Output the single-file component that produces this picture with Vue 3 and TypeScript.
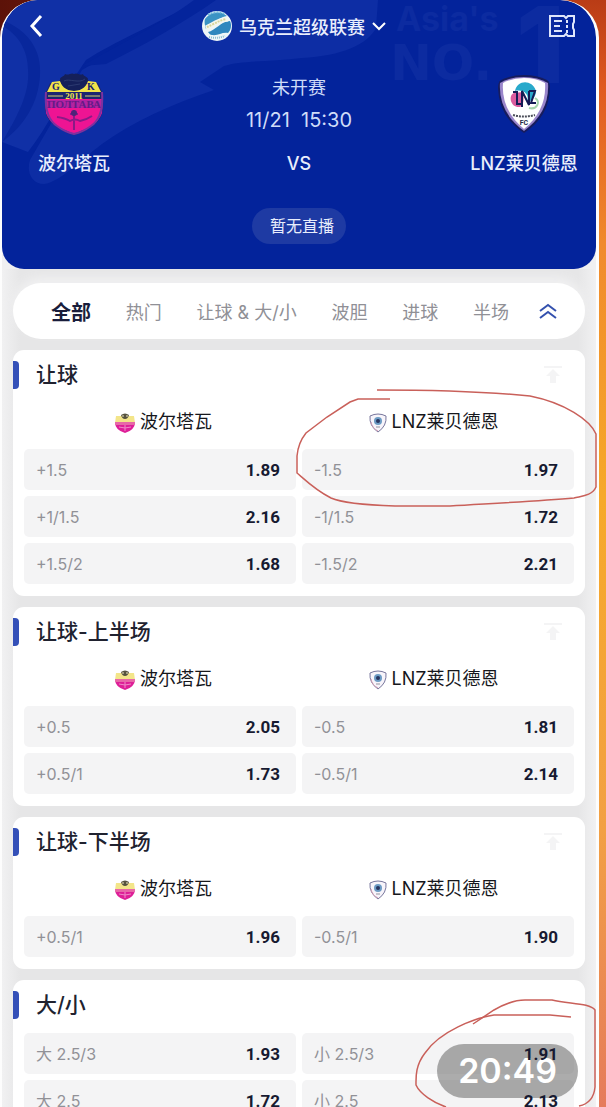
<script setup lang="ts">
interface Odd {
  label: string
  price: string
}
interface Market {
  title: string
  teams: boolean
  pin: boolean
  odds: Odd[]
}

const tabs: string[] = ['全部', '热门', '让球 & 大/小', '波胆', '进球', '半场']

const home = '波尔塔瓦'
const away = 'LNZ莱贝德恩'

const markets: Market[] = [
  {
    title: '让球',
    teams: true,
    pin: true,
    odds: [
      { label: '+1.5', price: '1.89' },
      { label: '-1.5', price: '1.97' },
      { label: '+1/1.5', price: '2.16' },
      { label: '-1/1.5', price: '1.72' },
      { label: '+1.5/2', price: '1.68' },
      { label: '-1.5/2', price: '2.21' },
    ],
  },
  {
    title: '让球-上半场',
    teams: true,
    pin: true,
    odds: [
      { label: '+0.5', price: '2.05' },
      { label: '-0.5', price: '1.81' },
      { label: '+0.5/1', price: '1.73' },
      { label: '-0.5/1', price: '2.14' },
    ],
  },
  {
    title: '让球-下半场',
    teams: true,
    pin: true,
    odds: [
      { label: '+0.5/1', price: '1.96' },
      { label: '-0.5/1', price: '1.90' },
    ],
  },
  {
    title: '大/小',
    teams: false,
    pin: false,
    odds: [
      { label: '大 2.5/3', price: '1.93' },
      { label: '小 2.5/3', price: '1.91' },
      { label: '大 2.5', price: '1.72' },
      { label: '小 2.5', price: '2.13' },
    ],
  },
]
</script>

<template>
  <div class="page">
    <div class="screen">
      <header class="hero">
        <svg class="hero-art" viewBox="0 0 594 269" preserveAspectRatio="xMidYMid slice" aria-hidden="true">
          <path d="M190 0H376L374 28C366 44 340 56 300 58C270 62 240 60 222 66L198 82L212 90C170 104 130 122 100 144C76 162 58 182 42 184C30 184 24 172 28 160L80 70C110 54 160 26 190 0Z" fill="#0d2da4" />
          <path d="M0 0H198C150 26 112 42 84 60L76 72C60 96 46 126 26 152L0 142Z" fill="#1030a6" />
          <path d="M192 0H214C180 24 140 46 104 64L80 66C110 48 160 24 192 0Z" fill="#04249c" />
          <path d="M0 20C26 30 40 50 38 76C36 104 22 126 0 142C16 116 28 92 26 70C26 50 16 34 0 26Z" fill="#08279c" />
          <g fill="#0c2ba0">
            <text x="394" y="31" font-family="Inter, sans-serif" font-size="34" font-weight="700">Asia's</text>
            <text x="388" y="80" font-family="DejaVu Sans, sans-serif" font-size="50" font-weight="700">NO.</text>
            <text x="514" y="83" font-family="Inter, sans-serif" font-size="106" font-weight="900">1</text>
          </g>
        </svg>

        <div class="topbar">
          <button class="icon-btn" aria-label="返回">
            <svg width="14" height="24" viewBox="0 0 14 24"><path d="M12 2L3 12L12 22" fill="none" stroke="#fff" stroke-width="3" /></svg>
          </button>
          <button class="league">
            <svg width="30" height="30" viewBox="0 0 30 30" aria-hidden="true">
              <circle cx="15" cy="15" r="15" fill="#eef6f8" />
              <path d="M3 8A15 15 0 0 1 25 5C19 6 10 12 4 18C3 15 2 11 3 8Z" fill="#3b93c4" />
              <path d="M28 10C30 14 29 19 26 22C20 21 16 25 10 24C8 24 7 22 6 21C13 20 19 10 28 10Z" fill="#2f87be" />
              <path d="M4 17C9 15 16 9 26 8" fill="none" stroke="#f4f6ee" stroke-width="5" />
              <path d="M5 16C10 14 16 10 24 8" fill="none" stroke="#d8d69a" stroke-width="2" stroke-dasharray="2 1" />
              <path d="M6 4C10 1 18 0 23 3" fill="none" stroke="#73b8dc" stroke-width="2" stroke-dasharray="2 1" />
              <path d="M7 26Q15 28 23 25" fill="none" stroke="#8cbdd0" stroke-width="2" stroke-dasharray="1 1" />
            </svg>
            <span>乌克兰超级联赛</span>
            <svg width="14" height="10" viewBox="0 0 14 10" aria-hidden="true"><path d="M1 2L7 8L13 2" fill="none" stroke="#fff" stroke-width="2" /></svg>
          </button>
          <button class="icon-btn" aria-label="注单">
            <svg width="26" height="24" viewBox="0 0 26 24" fill="none" stroke="#dfe6fb" stroke-width="2">
              <path d="M1 2H15L17 4L19 2H25V8L24 10V14L25 16V22H19L17 20L15 22H1Z" />
              <path d="M5 7H13M5 12H11M5 17H13" />
              <path d="M18 6V19" stroke-dasharray="3 2" />
            </svg>
          </button>
        </div>

        <div class="match">
          <div class="crest">
            <svg width="62" height="64" viewBox="0 0 62 64" role="img" aria-label="波尔塔瓦">
              <path d="M7 11H16V8H46V11H55L59 20C60 36 62 46 48 55Q39 61 31 63Q23 61 14 55C0 46 2 36 3 20Z" fill="#1c2570" />
              <path d="M9 10L17 9Q21 18 31 18Q41 18 45 9L53 10L58 20H4Z" fill="#f1e34a" />
              <path d="M2 27H60L59 41Q56 50 45 56L31 62L17 56Q6 50 3 41Z" fill="#ee1493" />
              <path d="M3 28H59V36H3Z" fill="#b422a1" />
              <path d="M17 7C18 4 21 5 22 2C26 4 28 0 31 2C34 0 37 4 40 2C41 5 44 4 45 7Q44 18 31 19Q18 18 17 7Z" fill="#15205a" />
              <path d="M21 9C26 6 36 12 42 7M25 14L37 12" stroke="#2c3a70" stroke-width="1" fill="none" />
              <path d="M3 20Q1 45 14 54Q22 60 31 62Q40 60 48 54Q61 45 59 20" stroke="#7c329f" stroke-width="2" fill="none" />
              <path d="M5 24H20M42 24H57" stroke="#d9d070" stroke-width="1" />
              <path d="M31 38V58M14 45Q22 46 27 49Q32 46 37 49Q43 48 49 44M27 42H35" stroke="#8b1a86" stroke-width="2" fill="none" />
              <circle cx="31" cy="41" r="3" fill="#4e2379" />
              <g font-family="Liberation Serif, serif" font-weight="700" text-anchor="middle">
                <text x="13" y="18" font-size="10" fill="#1c2570">G</text>
                <text x="48" y="18" font-size="10" fill="#1c2570">K</text>
                <text x="31" y="27" font-size="9" fill="#f1e34a">2011</text>
                <text x="31" y="36" font-size="11" fill="#651a87">ПОЛТАВА</text>
              </g>
            </svg>
          </div>
          <div class="kickoff">
            <span>未开赛</span>
            <time>11/21&nbsp; 15:30</time>
          </div>
          <div class="crest">
            <svg width="52" height="60" viewBox="0 0 52 60" role="img" aria-label="LNZ莱贝德恩">
              <path d="M26 1Q39 1 49 6Q52 8 52 14Q51 43 26 59Q1 43 0 14Q0 8 3 6Q13 1 26 1Z" fill="#171c5d" />
              <path d="M26 3Q40 3 50 9Q52 38 26 57Q0 38 2 9Q12 3 26 3Z" fill="#9a86cb" />
              <path d="M26 4Q38 4 47 9Q49 36 26 55Q3 36 5 9Q14 4 26 4Z" fill="#fff" />
              <path d="M17 17C19 6 34 5 38 17C38 23 34 27 29 28C32 20 25 15 17 17Z" fill="#28a9cb" />
              <path d="M16 19C10 21 12 34 22 33C26 32 26 23 25 18Z" fill="#db5b9e" />
              <path d="M37 24C43 28 39 36 31 34" fill="none" stroke="#a6d6ac" stroke-width="2" />
              <path d="M15 18H19V30H24M24 33V17L31 31V17M31 17H37L33 29H38" fill="none" stroke="#151b55" stroke-width="2" />
              <path d="M15 41Q26 44 37 41" fill="none" stroke="#4c4f5a" stroke-width="2" stroke-dasharray="2 1" />
              <text x="26" y="51" font-family="Roboto, sans-serif" font-size="7" font-weight="700" text-anchor="middle" fill="#282b48">FC</text>
            </svg>
          </div>
          <strong class="side">{{ home }}</strong>
          <strong class="versus">VS</strong>
          <strong class="side">{{ away }}</strong>
        </div>

        <button class="live">暂无直播</button>
      </header>

      <main class="content">
        <nav class="tabs" aria-label="玩法">
          <div class="tab-list">
            <button v-for="(tab, i) in tabs" :key="tab" class="tab" :class="{ active: i === 0 }">{{ tab }}</button>
          </div>
          <button class="collapse" aria-label="全部收起">
            <svg width="18" height="16" viewBox="0 0 18 16"><path d="M1 8L9 2L17 8M1 15L9 9L17 15" fill="none" stroke="#3451ae" stroke-width="2" /></svg>
          </button>
        </nav>

        <section v-for="market in markets" :key="market.title" class="market">
          <div class="market-head">
            <h2>{{ market.title }}</h2>
            <button v-if="market.pin" class="pin" aria-label="置顶">
              <svg width="20" height="20" viewBox="0 0 20 20"><path d="M1 1H19V3H1ZM10 4L17 11H13V18H7V11H3Z" fill="#f4f4f5" /></svg>
            </button>
          </div>
          <div v-if="market.teams" class="teams">
            <div class="team">
              <svg width="22" height="22" viewBox="0 0 22 22" aria-hidden="true">
                <path d="M2 4H20L21 11H1Z" fill="#f3e58a" />
                <path d="M1 10H21Q21 18 11 21Q1 18 1 10Z" fill="#de1f98" />
                <path d="M1 10H21V13H1Z" fill="#e768a8" />
                <path d="M7 3Q11 0 15 3Q14 7 11 7Q8 7 7 3Z" fill="#55523e" />
                <path d="M8 4H10M12 4H14" stroke="#eee5bd" stroke-width="1" />
                <path d="M11 13V19M5 15Q11 17 17 15" fill="none" stroke="#f08ac7" stroke-width="1" />
              </svg>
              <span>{{ home }}</span>
            </div>
            <div class="team away">
              <svg width="18" height="20" viewBox="0 0 18 20" aria-hidden="true">
                <path d="M1 3Q9 -1 17 3Q18 13 9 19Q0 13 1 3Z" fill="#f7f4fa" stroke="#77769c" stroke-width="1" />
                <path d="M2 9Q3 15 9 18" fill="none" stroke="#d4a0b4" stroke-width="1" />
                <circle cx="9" cy="8" r="4" fill="#6c9bc4" />
                <circle cx="9" cy="8" r="2" fill="#28345f" />
                <path d="M7 14H11" stroke="#94939f" stroke-width="1" />
              </svg>
              <span>{{ away }}</span>
            </div>
          </div>
          <div class="odds">
            <button v-for="odd in market.odds" :key="odd.label" class="odd">
              <span class="label">{{ odd.label }}</span>
              <span class="price">{{ odd.price }}</span>
            </button>
          </div>
        </section>
      </main>
    </div>

    <div class="clock">20:49</div>
    <svg class="marks" viewBox="0 0 606 1107" preserveAspectRatio="none" aria-hidden="true">
      <path d="M377 390C440 390 490 392 530 396C565 403 590 420 596 434V487C592 496 581 496 574 498C540 501 500 503 450 506H395C365 505 340 502 331 498C315 490 303 478 297 473V456C298 444 302 438 306 433L327 417L350 402L358 399H390" />
      <path d="M473 1024L494 1010C508 1002 518 1000 525 1000H552C570 1004 590 1003 595 1010V1087C594 1098 589 1104 579 1106" />
      <path d="M571 1017L550 1015H494C475 1018 440 1031 425 1053C415 1066 416 1078 416 1085C420 1094 434 1103 446 1107" />
    </svg>
  </div>
</template>

<style>
html,
body {
  margin: 0;
}
</style>

<style scoped>
* {
  box-sizing: border-box;
}

button {
  border: 0;
  padding: 0;
  background: none;
  color: inherit;
  font: inherit;
  cursor: pointer;
}

svg {
  display: block;
  flex: none;
}

.page {
  position: relative;
  height: 100vh;
  overflow: hidden;
  padding-right: 7px;
  font-family: Inter, "Noto Sans CJK SC", sans-serif;
  font-size: 18px;
  background:
    linear-gradient(90deg, #5c1208, rgba(92, 18, 8, 0) 80%) top / 100% 60px no-repeat,
    linear-gradient(180deg, #b93c16 0, #e05a20 8%, #f08a2c 22%, #f6a92a 45%, #f2a044 75%, #e57b5c 100%);
}

.screen {
  min-height: 100%;
  border-left: 2px solid #fdfdfd;
  border-right: 3px solid #fdfdfd;
  border-radius: 38px 38px 0 0;
  background: #f0f0f1;
  overflow: hidden;
}

.hero {
  position: relative;
  display: flex;
  flex-direction: column;
  align-items: center;
  padding-bottom: 25px;
  border-radius: 36px 36px 22px 22px;
  overflow: hidden;
  background: #03239b;
  color: #e9eefc;
}

.hero-art {
  position: absolute;
  inset: 0;
  width: 100%;
  height: 100%;
}

.topbar {
  position: relative;
  display: flex;
  align-items: center;
  justify-content: space-between;
  width: 100%;
  height: 52px;
  padding: 0 21px 0 27px;
}

.league {
  display: flex;
  align-items: center;
  gap: 7px;
  padding-right: 4px;
  font-weight: 500;
}

.match {
  position: relative;
  display: grid;
  grid-template-columns: 144px 1fr 144px;
  justify-items: center;
  width: 100%;
  padding-top: 20px;
}

.crest {
  display: flex;
  align-items: center;
  height: 64px;
}

.kickoff {
  display: flex;
  flex-direction: column;
  align-items: center;
  line-height: 32px;
  color: #cfdcf8;
}

.kickoff time {
  font-size: 20px;
}

.match strong {
  padding-top: 14px;
  line-height: 28px;
  font-weight: 500;
  white-space: nowrap;
}

.live {
  position: relative;
  height: 36px;
  margin-top: 30px;
  padding: 0 12px 2px 18px;
  border-radius: 18px;
  background: #1e3aa3;
  font-size: 16px;
}

.content {
  display: flex;
  flex-direction: column;
  gap: 11px;
  padding: 14px 11px 0;
  background: linear-gradient(90deg, #f1f1f2, #e6e6e7 3%, #e6e6e7 97%, #f1f1f2);
}

.tabs {
  display: flex;
  align-items: center;
  gap: 30px;
  height: 56px;
  padding: 0 28px 0 38px;
  border-radius: 28px;
  background: #fff;
  box-shadow: 0 -6px 10px #f0f0f1;
  color: #909096;
}

.tab-list {
  display: flex;
  flex: 1;
  align-items: center;
  justify-content: space-between;
}

.tab {
  white-space: nowrap;
}

.tab.active {
  font-size: 20px;
  font-weight: 700;
  color: #191d3b;
}

.market {
  padding: 0 11px 12px;
  border-radius: 11px;
  background: #fff;
}

.market-head {
  position: relative;
  display: flex;
  align-items: center;
  justify-content: space-between;
  height: 50px;
  margin-bottom: 3px;
  padding: 0 11px 0 12px;
}

.market-head::before {
  content: "";
  position: absolute;
  left: -11px;
  width: 6px;
  height: 28px;
  border-radius: 0 4px 4px 0;
  background: #3450b8;
}

h2 {
  margin: 0;
  font-size: 21px;
  font-weight: 500;
  line-height: 28px;
  color: #20222f;
}

.teams,
.odds {
  display: grid;
  grid-template-columns: 1fr 1fr;
  gap: 6px;
}

.teams {
  margin-bottom: 6px;
}

.team {
  display: flex;
  align-items: center;
  justify-content: center;
  gap: 4px;
  height: 40px;
  padding-left: 6px;
  line-height: 24px;
  color: #16171c;
}

.team.away {
  padding: 0 8px 0 0;
}

.team span {
  padding-bottom: 2px;
}

.odd {
  display: flex;
  align-items: center;
  justify-content: space-between;
  height: 41px;
  padding: 0 16px 0 12px;
  border-radius: 5px;
  background: #f4f4f5;
}

.label {
  font-size: 16px;
  line-height: 24px;
  color: #919197;
}

.price {
  position: relative;
  z-index: 2;
  font-family: Roboto, sans-serif;
  font-size: 17px;
  font-weight: 700;
  line-height: 24px;
  color: #171a31;
}

.clock {
  position: absolute;
  z-index: 1;
  right: 28px;
  bottom: 9px;
  height: 54px;
  padding: 0 21px;
  border-radius: 27px;
  background: rgba(90, 90, 90, 0.5);
  color: #fff;
  font-size: 34px;
  font-weight: 600;
  line-height: 54px;
}

.marks {
  position: absolute;
  inset: 0;
  width: 100%;
  height: 100%;
  fill: none;
  stroke: #c9605a;
  stroke-width: 1.5;
  pointer-events: none;
}
</style>
